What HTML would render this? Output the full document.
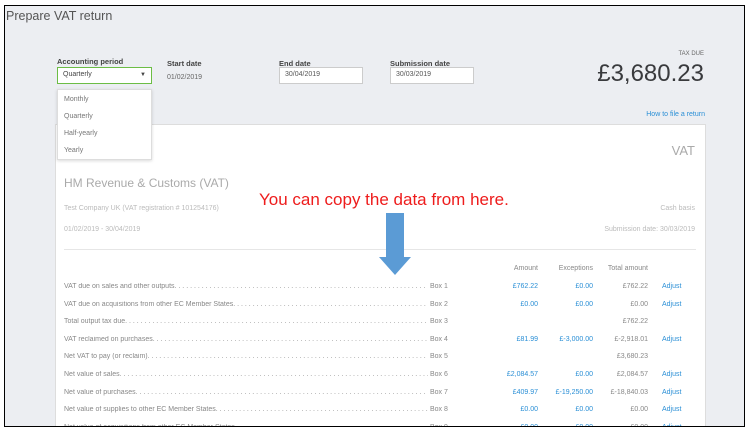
<!DOCTYPE html>
<html><head><meta charset="utf-8">
<style>
*{margin:0;padding:0;box-sizing:border-box}
html,body{width:752px;height:432px;overflow:hidden}
body{background:#fff;position:relative;font-family:"Liberation Sans",sans-serif;color:#555}
.frame{position:absolute;left:4px;top:5px;width:741px;height:422px;border:1.5px solid #000;background:#eceef2;overflow:hidden}
.abs{position:absolute;white-space:nowrap}
.lbl{font-size:7.5px;color:#444;font-weight:bold}
.inp{position:absolute;background:#fff;border:1px solid #ccc;font-size:7px;color:#555;padding:3px 5px;height:17px}
.panel{position:absolute;left:50px;top:118px;width:651px;height:302px;background:#fff;border:1px solid #ddd;border-bottom:none;overflow:hidden}
.row{position:absolute;left:8px;width:620px;height:12px;font-size:7px;color:#888}
.row .t{position:absolute;left:0;width:364px;overflow:hidden;white-space:nowrap}
.row .b{position:absolute;left:364px;width:30px;background:#fff;padding-left:2px}
.row .c{position:absolute;text-align:right;width:80px}
.blue{color:#2a8fd6}
</style></head><body>
<div class="frame">
  <div class="abs" style="left:1px;top:3px;font-size:12.5px;color:#555">Prepare VAT return</div>

  <div class="abs lbl" style="left:52px;top:51px">Accounting period</div>
  <div class="inp" style="left:52px;top:61px;width:95px;border:1.5px solid #6cbd45;color:#444">Quarterly<span style="position:absolute;right:5px;top:4px;font-size:6px">&#9660;</span></div>

  <div class="abs lbl" style="left:162px;top:53px">Start date</div>
  <div class="abs" style="left:162px;top:68px;font-size:7px;color:#666">01/02/2019</div>
  <div class="abs lbl" style="left:274px;top:53px">End date</div>
  <div class="inp" style="left:274px;top:61px;width:84px">30/04/2019</div>
  <div class="abs lbl" style="left:385px;top:53px">Submission date</div>
  <div class="inp" style="left:385px;top:61px;width:84px">30/03/2019</div>

  <div class="abs" style="right:40px;top:45px;font-size:6px;color:#666">TAX DUE</div>
  <div class="abs" style="right:40px;top:54px;font-size:24px;color:#393a3d">£3,680.23</div>
  <div class="abs" style="right:39px;top:105px;font-size:7px;color:#2a8fd6">How to file a return</div>

  <div class="panel">
    <div class="abs" style="right:10px;top:18px;font-size:13px;color:#aaa">VAT</div>
    <div class="abs" style="left:8px;top:51px;font-size:12px;color:#aaa">HM Revenue &amp; Customs (VAT)</div>
    <div class="abs" style="left:8px;top:80px;font-size:7px;color:#bbb">Test Company UK (VAT registration # 101254176)</div>
    <div class="abs" style="right:10px;top:80px;font-size:7px;color:#bbb">Cash basis</div>
    <div class="abs" style="left:8px;top:101px;font-size:7px;color:#bbb">01/02/2019 - 30/04/2019</div>
    <div class="abs" style="right:10px;top:101px;font-size:7px;color:#bbb">Submission date: 30/03/2019</div>
    <div class="abs" style="left:8px;top:124px;width:632px;height:1px;background:#e6e6e6"></div>
    <div class="abs" style="left:203px;top:65px;font-size:17px;color:#ee1c1c">You can copy the data from here.</div>
    <svg class="abs" style="left:322px;top:88px" width="34" height="64" viewBox="0 0 34 64"><path d="M8 0H26V44H33L17 62L1 44H8Z" fill="#5b9bd5"/></svg>

    <div class="row" style="top:140px;color:#888"><span class="c" style="left:394px">Amount</span><span class="c" style="left:449px">Exceptions</span><span class="c" style="left:504px">Total amount</span></div>
    <div id="rows"></div>
  </div>

  <div style="position:absolute;left:52px;top:83px;width:95px;height:71px;background:#fff;border:1px solid #ddd;box-shadow:0 1px 3px rgba(0,0,0,.15);font-size:7px;color:#777;z-index:5">
    <div class="abs" style="left:6px;top:6px">Monthly</div>
    <div class="abs" style="left:6px;top:23px">Quarterly</div>
    <div class="abs" style="left:6px;top:40px">Half-yearly</div>
    <div class="abs" style="left:6px;top:57px">Yearly</div>
  </div>
</div>
<script>
var d=[["VAT due on sales and other outputs.","Box 1","£762.22","£0.00","£762.22",1],
["VAT due on acquisitions from other EC Member States.","Box 2","£0.00","£0.00","£0.00",1],
["Total output tax due.","Box 3","","","£762.22",0],
["VAT reclaimed on purchases.","Box 4","£81.99","£-3,000.00","£-2,918.01",1],
["Net VAT to pay (or reclaim).","Box 5","","","£3,680.23",0],
["Net value of sales.","Box 6","£2,084.57","£0.00","£2,084.57",1],
["Net value of purchases.","Box 7","£409.97","£-19,250.00","£-18,840.03",1],
["Net value of supplies to other EC Member States.","Box 8","£0.00","£0.00","£0.00",1],
["Net value of acquisitions from other EC Member States.","Box 9","£0.00","£0.00","£0.00",1]];
var h="",dots=" . . . . . . . . . . . . . . . . . . . . . . . . . . . . . . . . . . . . . . . . . . . . . . . . . . . . . . . . . . . . . . . . . . . . . . . . . . . . . . . . . . . . . . . . . . . .";
d.forEach(function(r,i){var y=158+i*17.6;
h+='<div class="row" style="top:'+y+'px"><span class="t">'+r[0]+dots+'</span><span class="b">'+r[1]+'</span><span class="c blue" style="left:394px">'+r[2]+'</span><span class="c blue" style="left:449px">'+r[3]+'</span><span class="c" style="left:504px">'+r[4]+'</span>'+(r[5]?'<span class="blue" style="position:absolute;left:598px">Adjust</span>':'')+'</div>';});
document.getElementById("rows").outerHTML=h;
</script>
</body></html>
